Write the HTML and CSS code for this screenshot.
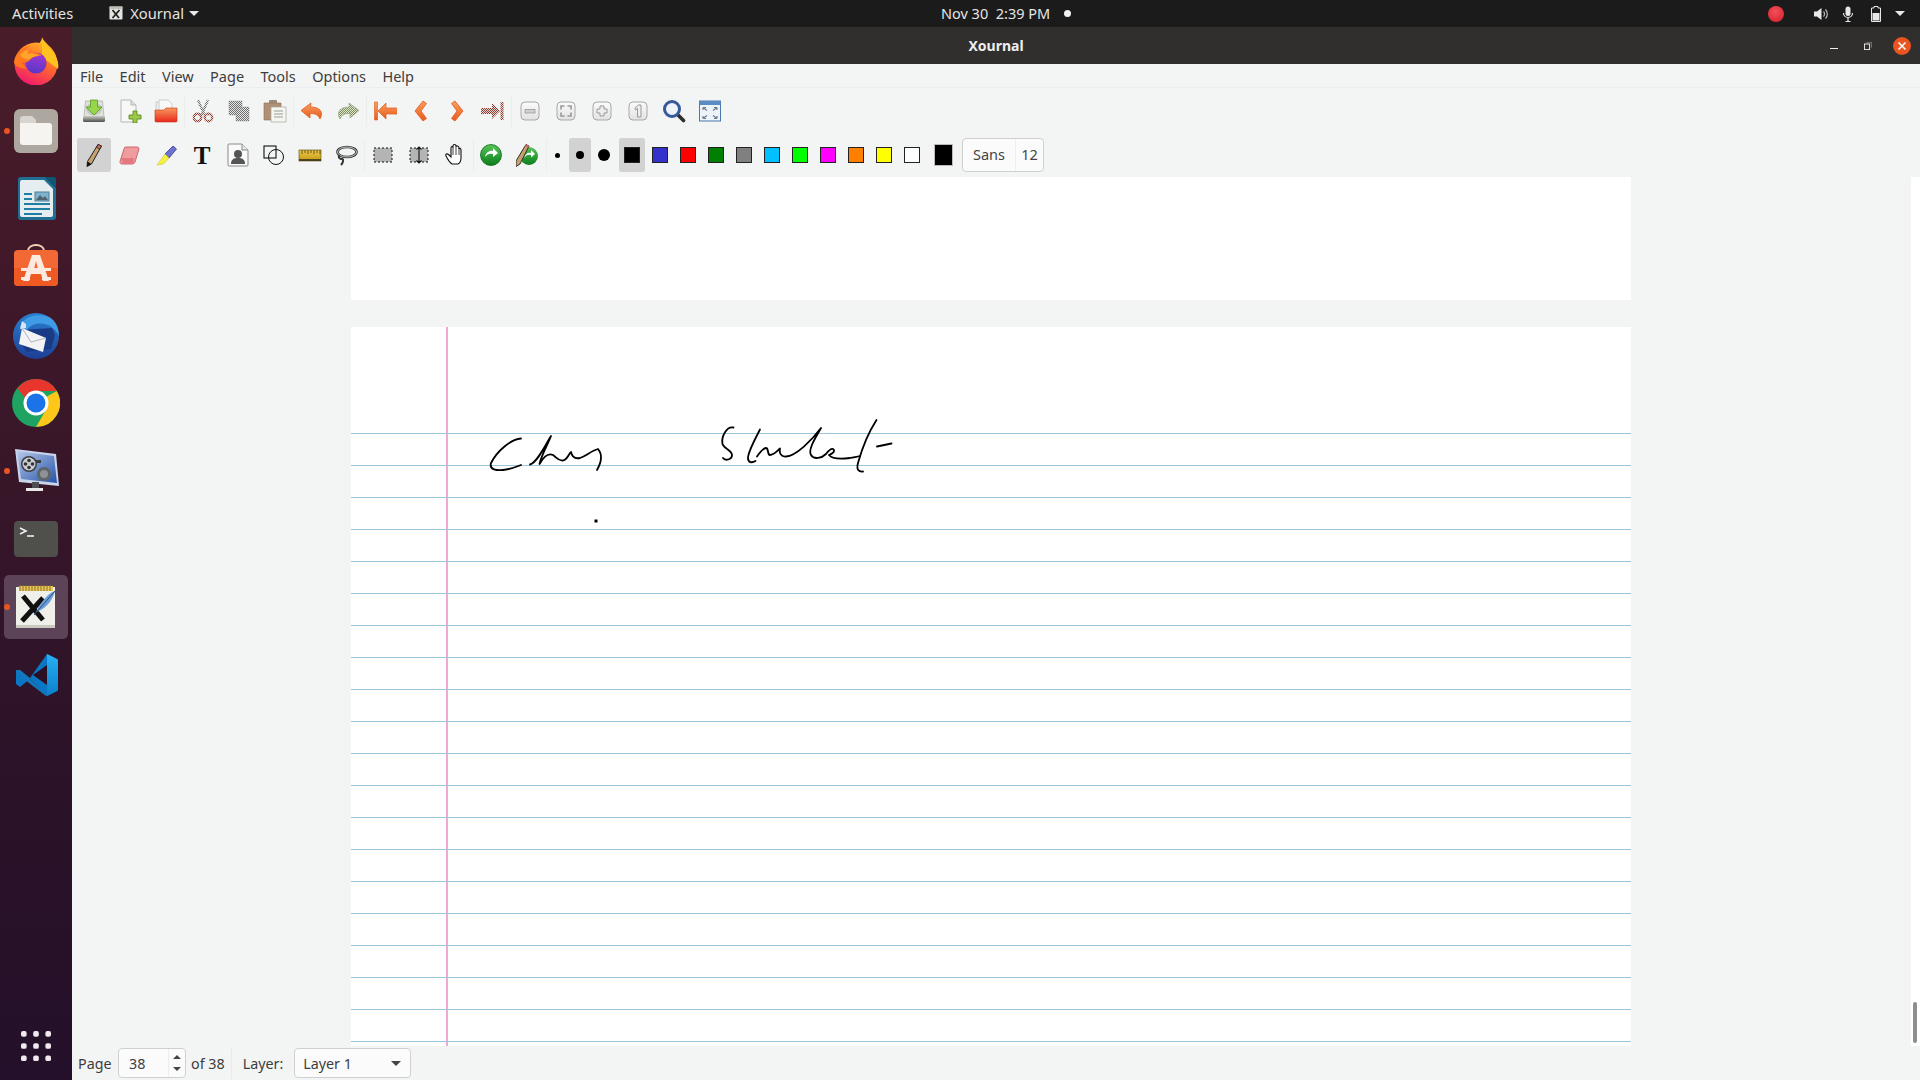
FILE: index.html
```html
<!DOCTYPE html>
<html lang="en">
<head>
<meta charset="utf-8">
<title>Xournal</title>
<link rel="stylesheet" href="styles.css">
</head>
<body>
<svg class="defs" aria-hidden="true">
<defs>
<pattern id="dr" width="2" height="2" patternUnits="userSpaceOnUse"><rect width="2" height="2" fill="#e8d8d4"/><rect width="1" height="1" fill="#8f3b30"/><rect x="1" y="1" width="1" height="1" fill="#8f3b30"/></pattern>
<pattern id="dg" width="2" height="2" patternUnits="userSpaceOnUse"><rect width="2" height="2" fill="#e8e8e8"/><rect width="1" height="1" fill="#6d6d6d"/><rect x="1" y="1" width="1" height="1" fill="#6d6d6d"/></pattern>
<pattern id="dv" width="2" height="2" patternUnits="userSpaceOnUse"><rect width="2" height="2" fill="#dfe6cf"/><rect width="1" height="1" fill="#7d8f5c"/><rect x="1" y="1" width="1" height="1" fill="#7d8f5c"/></pattern>
<linearGradient id="or" x1="0" y1="0" x2="0" y2="1"><stop offset="0" stop-color="#fba05c"/><stop offset="1" stop-color="#e7591c"/></linearGradient>
<linearGradient id="fo" x1="0" y1="0" x2="0" y2="1"><stop offset="0" stop-color="#f79a5e"/><stop offset="1" stop-color="#e9271b"/></linearGradient>
<linearGradient id="hd" x1="0" y1="0" x2="0" y2="1"><stop offset="0" stop-color="#c8ccc4"/><stop offset="1" stop-color="#4c4f4a"/></linearGradient>
<linearGradient id="grn" x1="0" y1="0" x2="0" y2="1"><stop offset="0" stop-color="#58c45a"/><stop offset="1" stop-color="#0b7d1a"/></linearGradient>
<linearGradient id="btn" x1="0" y1="0" x2="0" y2="1"><stop offset="0" stop-color="#fbfbfb"/><stop offset="1" stop-color="#e2e2e2"/></linearGradient>
<linearGradient id="ff" x1="0.8" y1="0" x2="0.3" y2="1"><stop offset="0" stop-color="#ffbf25"/><stop offset="0.45" stop-color="#ff6a2b"/><stop offset="1" stop-color="#f0186e"/></linearGradient>
<linearGradient id="ffg" x1="0.6" y1="0" x2="0.4" y2="1"><stop offset="0" stop-color="#a13bd1"/><stop offset="1" stop-color="#5a34c9"/></linearGradient>
<linearGradient id="vs" x1="0" y1="0" x2="0" y2="1"><stop offset="0" stop-color="#2ab0f2"/><stop offset="1" stop-color="#0a80cc"/></linearGradient>
<linearGradient id="mon" x1="0" y1="0" x2="1" y2="1"><stop offset="0" stop-color="#b7c9ea"/><stop offset="1" stop-color="#2553a8"/></linearGradient>
<linearGradient id="tb" x1="0" y1="0" x2="0" y2="1"><stop offset="0" stop-color="#2b7fd0"/><stop offset="1" stop-color="#1d3f95"/></linearGradient>
<linearGradient id="ru" x1="0" y1="0" x2="0" y2="1"><stop offset="0" stop-color="#eec94e"/><stop offset="1" stop-color="#c49a14"/></linearGradient>
</defs>
</svg>

<header class="topbar">
  <span class="tb-text">Activities</span>
  <span class="tb-app">
    <svg class="tb-appicon" viewBox="0 0 14 14"><rect x="0.5" y="0.5" width="13" height="13" rx="1" fill="#e4e4e0"/><rect x="0.5" y="0.5" width="13" height="2.5" fill="#bdbdb6"/><path d="M3.5 4l6.500 8M10.500 4l-7 8" stroke="#222" stroke-width="1.800"/></svg>
    <span class="tb-text">Xournal</span>
    <span class="caret"></span>
  </span>
  <span class="tb-clock">Nov 30&nbsp;&nbsp;2:39 PM</span>
  <span class="tb-dot"></span>
  <span class="tb-right">
    <span class="rec"></span>
    <svg class="tb-ic spk" viewBox="0 0 16 16"><path d="M1 5.500h3L8.500 2v12L4 10.500H1z" fill="#e8e8e8"/><path d="M10.500 5.500a3.500 3.500 0 010 5M12.500 3.500a6.500 6.500 0 010 9" fill="none" stroke="#bbb" stroke-width="1.200"/></svg>
    <svg class="tb-ic mic" viewBox="0 0 16 16"><rect x="5.500" y="0.500" width="5" height="9.500" rx="2.500" fill="#e8e8e8"/><path d="M3.500 7a4.500 4.500 0 009 0M8 11.500V15M5.500 15.500h5" fill="none" stroke="#e8e8e8" stroke-width="1.200"/></svg>
    <svg class="tb-ic bat" viewBox="0 0 16 16"><path d="M6 .5h4v1.500h2.500v13.500h-9V2H6z" fill="none" stroke="#e8e8e8" stroke-width="1"/><rect x="4.500" y="7" width="7" height="7.500" fill="#e8e8e8"/></svg>
    <span class="caret caret-r"></span>
  </span>
</header>

<div class="desktop">
  <nav class="dock">
    <div class="dock-item dock-first">
      <svg class="dock-ic" viewBox="0 0 48 48"><path d="M24 9c3-2 6-5 6-9 2 6 11 10 14 19l-14 3z" fill="#ffbd20"/><circle cx="24" cy="27" r="21.500" fill="url(#ff)"/><path d="M30 1c1 6 9 10 13 17 3 5 4 10 3 14L30 20z" fill="#ffc21f"/><circle cx="24" cy="26" r="10.500" fill="url(#ffg)"/><path d="M2 25C3 16 10 11 17 9c-3 3-3 5-2 7 5-2 11-1 15 3-5-1-10 1-12 4-3 3-7 3-9 2 3 2 3 5 6 7-7-1-12-2-13-7z" fill="#ff7a1e"/><path d="M8 18c2-3 5-5 8-5-1 2 0 3 0 4 4-1 8 0 11 2-4 0-7 1-9 3-3 1-7 0-10-4z" fill="#ffa52b"/></svg>
    </div>
    <div class="dock-item">
      <span class="run"></span>
      <svg class="dock-ic" viewBox="0 0 48 48"><rect x="2" y="2" width="44" height="44" rx="6" fill="#aea79f"/><path d="M8 12a3 3 0 013-3h9l4 4v4H8z" fill="#d8d4cf"/><path d="M8 16h29a3 3 0 013 3v16a3 3 0 01-3 3H11a3 3 0 01-3-3z" fill="#f6f4f0"/></svg>
    </div>
    <div class="dock-item">
      <svg class="dock-ic" viewBox="0 0 48 48"><path d="M9 2h24l11 11v29a3 3 0 01-3 3H9a3 3 0 01-3-3V5a3 3 0 013-3z" fill="#1f6f93"/><path d="M10 5h22l9 9v26a2 2 0 01-2 2H10a2 2 0 01-2-2V7a2 2 0 012-2z" fill="#e6edf0"/><path d="M33 2h9a2 2 0 012 2v9z" fill="#0f5675"/><path d="M12 18h8v2h-8zM12 23h8v2h-8zM12 28h26v2H12zM12 33h26v2H12zM12 38h18v2H12z" fill="#1f7ea3"/><rect x="23" y="17" width="14" height="9" fill="#7fb3cc" stroke="#4d7f96"/><path d="M24 25l4-5 3 3 2-2 3 4z" fill="#4d6470"/></svg>
    </div>
    <div class="dock-item">
      <svg class="dock-ic" viewBox="0 0 48 48"><path d="M16 8c0-8 16-8 16 0" fill="none" stroke="#f8d0b8" stroke-width="2"/><rect x="2" y="7" width="44" height="36" rx="4" fill="#f36936"/><path d="M2 25h44v14a4 4 0 01-4 4H6a4 4 0 01-4-4z" fill="#ef5a24"/><path d="M20 12h8l9 26h-6l-2-7H19l-2 7h-6z" fill="#fce9df"/><path d="M22 26h4l-2-8z" fill="#f36936"/><path d="M9 25h30v3H9zM9 34h9v3H9zM30 34h9v3h-9z" fill="#fce9df"/></svg>
    </div>
    <div class="dock-item">
      <svg class="dock-ic" viewBox="0 0 48 48"><circle cx="24" cy="25" r="23" fill="url(#tb)"/><path d="M8 16c2-8 12-14 26-11 8 2 13 10 13 20-5-10-14-14-23-12-5 1-8 4-10 7z" fill="#3f9be5"/><path d="M10 19l30-2 3 7-4 14-24 3-7-10z" fill="#1a3a86"/><path d="M10 17l24 10-3 14L7 33z" fill="#f3f3f6"/><path d="M10 17l9 14 15-4" fill="none" stroke="#b3b5c0" stroke-width="1"/><path d="M10 10l4 3 0 4-6 1z" fill="#d7e6f5"/></svg>
    </div>
    <div class="dock-item">
      <svg class="dock-ic" viewBox="0 0 48 48"><circle cx="24" cy="24" r="24" fill="#1ea362"/><path d="M24 0a24 24 0 0120.800 12H24a12 12 0 00-11 7L5.500 9.200A24 24 0 0124 0z" fill="#e8362c"/><path d="M44.800 12A24 24 0 0124 48l10.400-18a12 12 0 00-.4-12z" fill="#fcc61a"/><circle cx="24" cy="24" r="12.500" fill="#fff"/><circle cx="24" cy="24" r="9.500" fill="#1a73e8"/></svg>
    </div>
    <div class="dock-item">
      <span class="run"></span>
      <svg class="dock-ic" viewBox="0 0 48 48"><path d="M3 2l41 5 3 32-40-4z" fill="#c9d4ea"/><path d="M5 4l37 5 3 27-36-4z" fill="url(#mon)"/><circle cx="17" cy="17" r="8" fill="#3c3f42"/><circle cx="17" cy="17" r="6.500" fill="#c9ccd0"/><circle cx="17" cy="13.500" r="1.800" fill="#333"/><circle cx="17" cy="20.500" r="1.800" fill="#333"/><circle cx="13.500" cy="17" r="1.800" fill="#333"/><circle cx="20.500" cy="17" r="1.800" fill="#333"/><path d="M24 13h5v3h-5z" fill="#3c3f42"/><circle cx="32" cy="27" r="7" fill="#5f6468"/><circle cx="32" cy="27" r="4" fill="#8e9296"/><path d="M20 35h7v6h-7z" fill="#4d4f52"/><path d="M14 41h17v3H14z" fill="#e8e8e8"/></svg>
    </div>
    <div class="dock-item">
      <svg class="dock-ic term" viewBox="0 0 48 48"><rect x="2" y="6" width="44" height="36" rx="4" fill="#4f4f4b"/><path d="M8 13l6 3-6 3" fill="none" stroke="#f0f0f0" stroke-width="1.600"/><path d="M15 21h7" stroke="#f0f0f0" stroke-width="1.600"/></svg>
    </div>
    <div class="dock-item dock-active">
      <span class="run"></span>
      <svg class="dock-ic" viewBox="0 0 48 48"><ellipse cx="26" cy="41" rx="16" ry="3" fill="#cfcfc8"/><rect x="4" y="4" width="39" height="41" fill="#f0f0ea"/><rect x="4" y="42" width="39" height="3" fill="#c9c9c0"/><rect x="7" y="3" width="34" height="5" fill="#e9c75a"/><path d="M8 2v6M11 2v6M14 2v6M17 2v6M20 2v6M23 2v6M26 2v6M29 2v6M32 2v6M35 2v6M38 2v6" stroke="#8c7423" stroke-width="1"/><path d="M11 13l20 24M31 15L10 38" stroke="#111" stroke-width="5"/><path d="M43 8C36 10 28 20 24 29c7-2 16-9 19-21z" fill="#6b9fd8"/><path d="M43 8L22 32" stroke="#2c4f83" stroke-width="1"/></svg>
    </div>
    <div class="dock-item">
      <svg class="dock-ic" viewBox="0 0 48 48"><path d="M35 3l10 5a2 2 0 011 2v28a2 2 0 01-1 2l-10 5-17-17-10 8-4-3V22l4-3 10 8z" fill="#0a76c4"/><path d="M35 3l10 5a2 2 0 011 2v28a2 2 0 01-1 2l-10 5z" fill="url(#vs)"/><path d="M35 14L21 24l14 10z" fill="#2a0f25"/><path d="M4 19l4 0 27 25-1 1-30-23z" fill="#1278bd"/></svg>
    </div>
    <div class="dock-apps">
      <svg class="grid-ic" viewBox="0 0 32 32"><g fill="#f2e9f0"><rect x="0" y="0" width="6" height="6" rx="2"/><rect x="13" y="0" width="6" height="6" rx="2"/><rect x="26" y="0" width="6" height="6" rx="2"/><rect x="0" y="13" width="6" height="6" rx="2"/><rect x="13" y="13" width="6" height="6" rx="2"/><rect x="26" y="13" width="6" height="6" rx="2"/><rect x="0" y="26" width="6" height="6" rx="2"/><rect x="13" y="26" width="6" height="6" rx="2"/><rect x="26" y="26" width="6" height="6" rx="2"/></g></svg>
    </div>
  </nav>

  <main class="window">
    <div class="titlebar">
      <span class="title">Xournal</span>
      <span class="wc">
        <span class="wc-min"></span>
        <svg class="wc-res" viewBox="0 0 10 10"><path d="M3 0.500h6.500V7" fill="none" stroke="#888" stroke-width="1"/><rect x="0.500" y="2.500" width="6.500" height="7" fill="none" stroke="#eee" stroke-width="1.200"/></svg>
        <span class="wc-close"><svg viewBox="0 0 10 10"><path d="M1.500 1.500l7 7M8.500 1.500l-7 7" stroke="#fff" stroke-width="1.600"/></svg></span>
      </span>
    </div>
    <div class="menubar">
      <span>File</span><span>Edit</span><span>View</span><span>Page</span><span>Tools</span><span>Options</span><span>Help</span>
    </div>

    <div class="toolbar row1">
      <span class="tool"><svg viewBox="0 0 24 24"><path d="M3.500 2h17l1.500 16H2z" fill="#dfe3dc" stroke="#9aa097" stroke-width=".6"/><ellipse cx="12" cy="10" rx="8" ry="6.500" fill="#c3c9bf"/><rect x="1" y="17" width="22" height="6" rx="1.500" fill="url(#hd)"/><path d="M8.500 1h7v7h4.500l-8 8-8-8h4.500z" fill="#97d64a" stroke="#5b9a21" stroke-width=".8"/></svg></span>
      <span class="tool"><svg viewBox="0 0 24 24"><path d="M3 1h10l5 5v17H3z" fill="#f7f7f5" stroke="#b5b5b0"/><path d="M13 1v5h5" fill="#ddd" stroke="#b5b5b0"/><path d="M15 12h4v4h4v4h-4v4h-4v-4h-4v-4h4z" fill="#9cc84a" stroke="#5d8f22" stroke-width=".9"/></svg></span>
      <span class="tool"><svg viewBox="0 0 24 24"><path d="M2 3h9l2 2v8H2z" fill="#eee" stroke="#bbb" stroke-width=".7"/><path d="M5 1h9l4 4v9H5z" fill="#f8f8f6" stroke="#bbb" stroke-width=".7"/><path d="M1 11h9l2-2h11v13a1 1 0 01-1 1H2a1 1 0 01-1-1z" fill="url(#fo)" stroke="#c7371a" stroke-width=".6"/></svg></span>
      <span class="sep"></span>
      <span class="tool"><svg viewBox="0 0 24 24"><g fill="none"><path d="M7 1l6.500 15M17 1l-6.500 15" stroke="url(#dg)" stroke-width="2.400"/><circle cx="6.500" cy="18.500" r="3.700" stroke="url(#dr)" stroke-width="2.400"/><circle cx="17.500" cy="18.500" r="3.700" stroke="url(#dr)" stroke-width="2.400"/></g></svg></span>
      <span class="tool"><svg viewBox="0 0 24 24"><path d="M2 2h13v14H2z" fill="url(#dg)" stroke="#888" stroke-width=".4"/><path d="M9 8h13v14H9z" fill="url(#dg)" stroke="#888" stroke-width=".4"/></svg></span>
      <span class="tool"><svg viewBox="0 0 24 24"><path d="M1 4h6V2h6v2h5v17H1z" fill="#b08f74" stroke="#8d6d55" stroke-width=".6"/><rect x="6" y="1" width="8" height="4" rx="1" fill="#9c8876"/><path d="M8 8h15v15H8z" fill="#f5f5f2" stroke="#a6a6a0" stroke-width=".7"/><path d="M11 12h9M11 15h9M11 18h9" stroke="#9d9d97" stroke-width="1"/></svg></span>
      <span class="sep"></span>
      <span class="tool"><svg viewBox="0 0 24 24"><path d="M11 4L1 11.500l9 7.500v-4.500c5 0 8 1 10 5.500 4-7 0-12-9.500-12z" fill="url(#or)" stroke="#e15a1d" stroke-width=".8"/></svg></span>
      <span class="tool"><svg viewBox="0 0 24 24"><path d="M13 4l10 7.500-9 7.500v-4.500c-5 0-8 1-10 5.500-4-7 0-12 9.500-12z" fill="url(#dv)" stroke="#8d9b6c" stroke-width=".6"/></svg></span>
      <span class="sep"></span>
      <span class="tool"><svg viewBox="0 0 24 24"><path d="M1.500 3h3v18h-3z" fill="url(#or)" stroke="#e15a1d" stroke-width=".6"/><path d="M5 12l8-8v5h9a1.500 1.500 0 011.500 3 1.500 1.500 0 01-1.500 3h-9v5z" fill="url(#or)" stroke="#e15a1d" stroke-width=".7"/></svg></span>
      <span class="tool"><svg viewBox="0 0 24 24"><path d="M14 2L6 12l8 10 3.500-2.500L12 12l5.500-7.500z" fill="url(#or)" stroke="#e15a1d" stroke-width=".8"/></svg></span>
      <span class="tool"><svg viewBox="0 0 24 24"><path d="M10 2l8 10-8 10-3.500-2.500L12 12 6.500 4.500z" fill="url(#or)" stroke="#e15a1d" stroke-width=".8"/></svg></span>
      <span class="tool"><svg viewBox="0 0 24 24"><path d="M22.500 3h-3v18h3z" fill="url(#dr)"/><path d="M19 12l-8-8v5H2a1.500 1.500 0 00-1.500 3A1.500 1.500 0 002 15h9v5z" fill="url(#dr)"/></svg></span>
      <span class="sep"></span>
      <span class="tool"><svg viewBox="0 0 24 24"><rect x="3" y="3" width="18" height="18" rx="4" fill="url(#btn)" stroke="#a8a8a8"/><rect x="7" y="10.500" width="10" height="3.500" fill="#d0d0d0" stroke="#999" stroke-width=".8"/></svg></span>
      <span class="tool"><svg viewBox="0 0 24 24"><rect x="3" y="3" width="18" height="18" rx="4" fill="url(#btn)" stroke="#a8a8a8"/><path d="M7 10.500V7h3.500M13.500 7H17v3.500M17 13.500V17h-3.500M10.500 17H7v-3.500" fill="none" stroke="#999" stroke-width="1.600"/></svg></span>
      <span class="tool"><svg viewBox="0 0 24 24"><rect x="3" y="3" width="18" height="18" rx="4" fill="url(#btn)" stroke="#a8a8a8"/><path d="M10 7h4v3h3v4h-3v3h-4v-3H7v-4h3z" fill="#eee" stroke="#999"/></svg></span>
      <span class="tool"><svg viewBox="0 0 24 24"><rect x="3" y="3" width="18" height="18" rx="4" fill="url(#btn)" stroke="#a8a8a8"/><path d="M9 9l3.500-3H15v12h-3.500V9.500L9.500 11z" fill="#eee" stroke="#999"/></svg></span>
      <span class="tool"><svg viewBox="0 0 24 24"><path d="M15 15l6.500 6.500" stroke="#2e2e2e" stroke-width="3.600" stroke-linecap="round"/><circle cx="10" cy="10" r="7.500" fill="#eef3fa" stroke="#36599c" stroke-width="3"/></svg></span>
      <span class="tool"><svg viewBox="0 0 24 24"><rect x="1.500" y="2" width="21" height="20" fill="#eef3fa" stroke="#4d76ad"/><rect x="1.500" y="2" width="21" height="4" fill="#5c8cc4"/><path d="M5 8.500l4 3M5 8.500h3M5 8.500v2.500M19 8.500l-4 3M19 8.500h-3M19 8.500v2.500M5 19.500l4-3M5 19.500h3M5 19.500V17M19 19.500l-4-3M19 19.500h-3M19 19.500V17" stroke="#6a7d93" stroke-width="1.200" fill="none"/></svg></span>
    </div>

    <div class="toolbar row2">
      <span class="tool on"><svg viewBox="0 0 24 24"><path d="M16 1.500l3.500 1.500L9.500 21l-4.500 2.500.5-5z" fill="#c7a26f" stroke="#222" stroke-width="1"/><path d="M16 1.500l3.500 1.500-1.500 3-3.500-1.500z" fill="#d9686a" stroke="#222" stroke-width=".8"/><path d="M5.500 18.500l4 2.500L5 23.500z" fill="#111"/></svg></span>
      <span class="tool"><svg viewBox="0 0 24 24"><path d="M8 4h11a2 2 0 012 2l-4 13a3 3 0 01-3 2H4a2 2 0 01-2-2.500L6 6a2 2 0 012-2z" fill="#ee9c9e" stroke="#c85b62" stroke-width=".9"/><path d="M3 15h13l-1 6H5z" fill="#e3797f"/></svg></span>
      <span class="tool"><svg viewBox="0 0 24 24"><path d="M19 3l3.500 3L15 15l-4-4z" fill="#6b73d6" stroke="#23286b" stroke-width=".7"/><path d="M11 11l4 4-5.500 6-6.500 1z" fill="#f5f044" stroke="#c0bd24" stroke-width=".5"/></svg></span>
      <span class="tool"><span class="t-glyph">T</span></span>
      <span class="tool"><svg viewBox="0 0 24 24"><path d="M3 1h13l6 6v15a1 1 0 01-1 1H3a1 1 0 01-1-1V2a1 1 0 011-1z" fill="#fafafa" stroke="#8a8a8a"/><path d="M16 1v6h6" fill="#e8e8e8" stroke="#8a8a8a"/><circle cx="12" cy="11" r="4" fill="#555"/><path d="M5 21c0-5 3-6 7-6s7 1 7 6z" fill="#555"/></svg></span>
      <span class="tool"><svg viewBox="0 0 24 24"><rect x="2" y="3" width="12" height="12" fill="none" stroke="#111" stroke-width="1.100"/><circle cx="14" cy="14" r="7.500" fill="none" stroke="#111" stroke-width="1"/></svg></span>
      <span class="tool"><svg viewBox="0 0 24 24"><rect x="1" y="7" width="22" height="11" fill="url(#ru)" stroke="#5a4a10" stroke-width=".6"/><path d="M4 7v4M7 7v3M10 7v4M13 7v3M16 7v4M19 7v3M22 7v4" stroke="#5a4a10" stroke-width=".9"/><path d="M1 17h22" stroke="#222" stroke-width="1.400"/></svg></span>
      <span class="tool"><svg viewBox="0 0 24 24"><ellipse cx="13" cy="9" rx="9.500" ry="5" fill="none" stroke="#333" stroke-width="2.600"/><ellipse cx="13" cy="9" rx="9.500" ry="5" fill="none" stroke="#eee" stroke-width=".8"/><path d="M5 12c-1 3 1 4 3 4s1 4-1 6" fill="none" stroke="#333" stroke-width="2"/></svg></span>
      <span class="sep"></span>
      <span class="tool"><svg viewBox="0 0 24 24"><rect x="3" y="5" width="18" height="14" fill="#b4b4b4" stroke="#111" stroke-width="1" stroke-dasharray="2 2"/></svg></span>
      <span class="tool"><svg viewBox="0 0 24 24"><rect x="3" y="5" width="18" height="14" fill="#b4b4b4" stroke="#111" stroke-width="1" stroke-dasharray="2 2"/><path d="M12 4v16M9.500 6.500L12 4l2.500 2.500M9.500 17.500L12 20l2.500-2.500" fill="none" stroke="#111" stroke-width="1.100"/></svg></span>
      <span class="tool"><svg viewBox="0 0 24 24"><path d="M9 21c-3-2-5-6-6-8-1-2 1-3 3-1l2 2V5c0-2 2-2 2 0V3c0-2 3-2 3 0v1c0-2 3-1 3 1v1c0-1 2-1 2 1v8c0 3-1 5-3 6z" fill="#fff" stroke="#111" stroke-width="1.100"/><path d="M10 5v7M13 4v8M16 5v7" stroke="#111" stroke-width=".8"/></svg></span>
      <span class="sep"></span>
      <span class="tool"><svg viewBox="0 0 24 24"><g transform="translate(-1 0)"><circle cx="12" cy="12" r="10.500" fill="url(#grn)" stroke="#0a6a14" stroke-width=".8"/><path d="M6 14c1-5 5-7 8-6V5l5 5-5 4v-3c-3-1-6 0-8 3z" fill="#fff"/></g></svg></span>
      <span class="tool"><svg viewBox="0 0 24 24"><g transform="translate(-2 0)"><circle cx="15" cy="13" r="9" fill="url(#grn)"/><path d="M10 15c1-4 4-6 7-5V7l4 4-4 3.500V12c-3-1-5 0-7 3z" fill="#fff"/><path d="M12 1.500l3 1.500L6 21l-4 2.500L2 18z" fill="#c7a26f" stroke="#222" stroke-width=".9"/><path d="M12 1.500l3 1.500-1 2-3-1.500z" fill="#d9686a"/></g></svg></span>
      <span class="sep"></span>
      <span class="dotitem d1"><span class="dot dot-s"></span></span>
      <span class="dotitem d2 on"><span class="dot dot-m"></span></span>
      <span class="dotitem d3"><span class="dot dot-l"></span></span>
      <span class="swatch on"><span class="sw sw-big"></span></span>
      <span class="swatch"><span class="sw c-blue"></span></span>
      <span class="swatch"><span class="sw c-red"></span></span>
      <span class="swatch"><span class="sw c-green"></span></span>
      <span class="swatch"><span class="sw c-gray"></span></span>
      <span class="swatch"><span class="sw c-cyan"></span></span>
      <span class="swatch"><span class="sw c-lime"></span></span>
      <span class="swatch"><span class="sw c-mag"></span></span>
      <span class="swatch"><span class="sw c-orange"></span></span>
      <span class="swatch"><span class="sw c-yellow"></span></span>
      <span class="swatch"><span class="sw c-white"></span></span>
      <span class="colorbtn"><span class="cb-fill"></span></span>
      <span class="fontbtn"><span class="fb-name">Sans</span><span class="fb-size">12</span></span>
    </div>

    <div class="canvas">
      <div class="pages">
        <div class="page p1"></div>
        <div class="page p2">
          <div class="ruled"></div>
          <svg class="ink" viewBox="480 400 430 140">
            <g fill="none" stroke="#000" stroke-width="1.800" stroke-linecap="round" stroke-linejoin="round">
              <path d="M521 438.500C511 439 497 451 491 463C489 470 497 470.500 503 470C510 469.500 516 467 521 465"/>
              <path d="M530 464.500C537 463 546 444 551 436C548 444 541 456 539.500 464C544 456 549 453 553 455C557 458 558 461 563 460.500C568 459 569 453 571 452C572 457 575 459 580 458C586 456 591 451 598 449C603 455 601 463 597 470"/>
              <path d="M733.500 427.500C727 426 721 436 722.500 444C724 449 732 450 732 455C732 460 725 461 723 458"/>
              <path d="M760 429.500C754 441 748 452 748 458C748 463 752 463 755.500 461"/>
              <path d="M757 456.500C760 452 763 448 766 448C769 448 767 455 770 455C774 455 778 450 780 448.500C779 453 781 457 786 456.500C796 456 812 440 821 428C814 440 808 450 811 455C814 460 822 458 826 454C829 450 831 448 833 449C836 451 832 454 829 455C832 459 842 459 850 458C854 457 857 457 860 456"/>
              <path d="M876.500 420C870 430 863 445 858 463C856 470 859 472 863 471.500"/>
              <path d="M877 446.500L891.500 443.500"/>
            </g>
            <rect x="594.500" y="519.500" width="3" height="3" fill="#000"/>
          </svg>
        </div>
      </div>
      <div class="vscroll"><span class="thumb"></span></div>
    </div>

    <div class="statusbar">
      <span class="st-label">Page</span>
      <span class="spin"><span class="spin-val">38</span><span class="spin-btns"><span class="up"></span><span class="down"></span></span></span>
      <span class="st-of">of 38</span>
      <span class="st-sep"></span>
      <span class="st-layer">Layer:</span>
      <span class="combo"><span>Layer 1</span><span class="combo-arrow"></span></span>
    </div>
  </main>
</div>
</body>
</html>
```
FILE: styles.css
```css
* { box-sizing: border-box; }
html, body { margin: 0; height: 100%; }
body {
  width: 1920px; height: 1080px; overflow: hidden;
  display: flex; flex-direction: column;
  font-family: "Noto Sans", "Open Sans", sans-serif; font-size: 14px; color: #3d3d3d;
  background: #f3f4f4;
}
.defs { position: absolute; width: 0; height: 0; }

.topbar {
  height: 27px; flex: none; display: flex; align-items: center;
  background: #1b1b1b; color: #e4e4e4; padding-left: 12px;
}
.tb-text { font-size: 14.700px; line-height: 1; }
.tb-app { display: flex; align-items: center; margin-left: 36px; }
.tb-appicon { width: 14px; height: 14px; margin-right: 7px; }
.caret { width: 0; height: 0; border: 5px solid transparent; border-top: 5px solid #e8e8e8; border-bottom: 0; margin-left: 5px; }
.tb-clock { margin-left: 742px; font-size: 14.500px; line-height: 1; }
.tb-dot { width: 7px; height: 7px; border-radius: 50%; background: #f2f2f2; margin-left: 14px; }
.tb-right { margin-left: auto; display: flex; align-items: center; padding-right: 15px; }
.rec { width: 16px; height: 16px; border-radius: 50%; background: radial-gradient(circle at 45% 35%, #f4505a, #d01c28); }
.tb-ic { width: 16px; height: 16px; }
.spk { margin-left: 29px; }
.mic { margin-left: 11px; }
.bat { margin-left: 12px; }
.caret-r { margin-left: 11px; }

.desktop { flex: 1; display: flex; min-height: 0; }
.dock {
  width: 72px; flex: none; display: flex; flex-direction: column;
  background: linear-gradient(to bottom, #4a1c2a 0%, #3b1729 35%, #2a1228 75%, #24102a 100%);
}
.dock-item, .dock-apps { height: 68px; flex: none; display: flex; align-items: center; justify-content: center; position: relative; }
.dock-first { margin-bottom: 2px; }
.dock-apps { margin-top: auto; }
.dock-ic { width: 48px; height: 48px; }
.term { display: block; }
.grid-ic { width: 30px; height: 30px; }
.dock-active::before { content: ""; position: absolute; left: 4px; right: 4px; top: 2px; bottom: 2px; border-radius: 5px; background: #5c4358; }
.dock-active .dock-ic { position: relative; }
.run { position: absolute; left: 4px; top: 31px; width: 6px; height: 6px; border-radius: 50%; background: #e95420; z-index: 1; }

.window { flex: 1; min-width: 0; display: flex; flex-direction: column; }
.titlebar {
  height: 37px; flex: none; background: #302f2e; color: #eee; display: flex; align-items: center; justify-content: center; position: relative;
}
.title { font-weight: 700; font-size: 14px; }
.wc { position: absolute; right: 9px; top: 0; height: 37px; display: flex; align-items: center; }
.wc-min { width: 8px; height: 1px; background: #eee; margin-top: 5px; }
.wc-res { width: 8px; height: 8px; margin-left: 26px; }
.wc-close { width: 18px; height: 18px; border-radius: 50%; background: #e95420; margin-left: 21px; display: flex; align-items: center; justify-content: center; }
.wc-close svg { width: 10px; height: 10px; }

.menubar { height: 24px; flex: none; display: flex; align-items: center; gap: 16.400px; padding-left: 8px; padding-top: 1px; font-size: 14.500px; border-bottom: 1px solid #eceded; }
.toolbar { flex: none; display: flex; align-items: center; padding-left: 4px; }
.row1 { height: 45px; }
.row2 { height: 44px; }
.tool { width: 36px; height: 34px; flex: none; display: flex; align-items: center; justify-content: center; position: relative; }
.tool svg { width: 24px; height: 24px; display: block; }
.tool.on::before { content: ""; position: absolute; left: 1px; right: 1px; top: 0; bottom: 0; border-radius: 3px; background: #d2d2d2; }
.tool.on svg { position: relative; }
.t-glyph { font-family: "Liberation Serif", serif; font-weight: 700; font-size: 25px; line-height: 1; color: #111; }
.sep { width: 1px; height: 32px; flex: none; background: #ebeded; }

.dotitem { height: 34px; flex: none; display: flex; align-items: center; justify-content: center; position: relative; }
.d1 { width: 20px; }
.d2 { width: 26px; }
.d3 { width: 22px; margin-right: 3px; }
.d2.on::before { content: ""; position: absolute; left: 2px; right: 2px; top: 0; bottom: 0; border-radius: 3px; background: #d2d2d2; }
.dot { border-radius: 50%; background: #000; position: relative; display: block; }
.dot-s { width: 5px; height: 5px; }
.dot-m { width: 8px; height: 8px; }
.dot-l { width: 12px; height: 12px; }
.swatch { width: 28px; height: 34px; flex: none; display: flex; align-items: center; justify-content: center; position: relative; }
.swatch.on { background: #d2d2d2; border-radius: 3px; border-left: 1px solid #f3f4f4; border-right: 1px solid #f3f4f4; }
.sw { width: 16px; height: 16px; border: 1px solid #222; display: block; }
.sw-big { background: #000; }
.c-blue { background: #3333cc; }
.c-red { background: #ff0000; }
.c-green { background: #008000; }
.c-gray { background: #808080; }
.c-cyan { background: #00c0ff; }
.c-lime { background: #00ff00; }
.c-mag { background: #ff00ff; }
.c-orange { background: #ff8000; }
.c-yellow { background: #ffff00; }
.c-white { background: #ffffff; }
.colorbtn { width: 34px; height: 34px; flex: none; display: flex; align-items: center; justify-content: center; }
.cb-fill { width: 19px; height: 22px; background: #000; border: 1px solid #bbb; }
.fontbtn { width: 82px; height: 34px; margin-left: 2px; flex: none; display: flex; align-items: center; border: 1px solid #cfd1d1; border-radius: 4px; background: #fbfbfb; font-size: 14.500px; color: #444; }
.fb-name { width: 53px; text-align: center; border-right: 1px solid #eee; line-height: 30px; padding-bottom: 2px; }
.fb-size { flex: 1; text-align: center; padding-bottom: 2px; }

.canvas { flex: 1; min-height: 0; display: flex; }
.pages { flex: 1; min-width: 0; overflow: hidden; padding-left: 279px; }
.page { width: 1280px; background: #fff; position: relative; }
.p1 { height: 123px; }
.p2 { height: 719px; margin-top: 27px; overflow: hidden;
  background-image: linear-gradient(to right, transparent 95px, #f0a8d4 95px, #f0a8d4 97px, transparent 97px); }
.ruled { margin-top: 0; height: 100%; position: absolute; left: 0; right: 0; top: 106px;
  background-image: linear-gradient(#9cc4dc 1px, transparent 1px); background-size: 100% 32px; }
.ink { position: absolute; left: 129px; top: 73px; width: 430px; height: 140px; }
.vscroll { width: 9px; flex: none; background: #fff; position: relative; display: flex; align-items: flex-end; padding: 0 3px 3px 2px; }
.thumb { display: block; width: 4px; height: 41px; border-radius: 2px; background: #8e8e8e; }

.statusbar { height: 34px; flex: none; display: flex; align-items: center; padding-left: 6px; font-size: 14.300px; color: #3d3d3d; }
.st-label { width: 32px; }
.spin { width: 68px; height: 30px; margin-left: 8px; border: 1px solid #cfd1d1; border-radius: 4px; background: #fbfbfb; display: flex; align-items: center; }
.spin-val { flex: 1; padding-left: 10px; }
.spin-btns { width: 17px; height: 100%; border-left: 1px solid #eee; display: flex; flex-direction: column; align-items: center; justify-content: center; gap: 8px; }
.up, .down { width: 0; height: 0; border: 4.500px solid transparent; }
.up { border-bottom: 4.500px solid #444; border-top: 0; }
.down { border-top: 4.500px solid #444; border-bottom: 0; }
.st-of { margin-left: 5px; }
.st-sep { width: 1px; height: 32px; background: #e8eaea; margin-left: 6px; }
.st-layer { margin-left: 11px; }
.combo { width: 117px; height: 30px; margin-left: 11px; border: 1px solid #cfd1d1; border-radius: 4px; background: #fbfbfb; display: flex; align-items: center; justify-content: space-between; padding: 0 9px 0 8px; }
.combo-arrow { width: 0; height: 0; border: 5px solid transparent; border-top: 5px solid #444; border-bottom: 0; }
```
